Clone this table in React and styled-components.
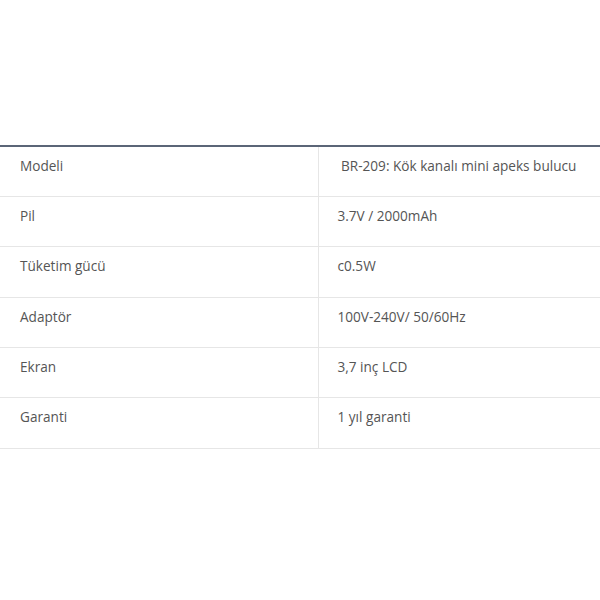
import React from 'react';
import styled, { createGlobalStyle } from 'styled-components';

const GlobalStyle = createGlobalStyle`
    body {
        margin: 0;
        background: #fff;
        font-family: "Open Sans", "Noto Sans", sans-serif;
    }
`

const Page = styled.div`
    width: 600px;
    height: 600px;
    padding-top: 145px;
    box-sizing: border-box;
`

const SpecTable = styled.table`
    width: 100%;
    border-collapse: collapse;
    border-top: 2px solid #5b6577;
`

const Row = styled.tr`
    height: 50.4px;
    border-bottom: 1px solid #e6e6e6;
`

const Cell = styled.td`
    vertical-align: top;
    padding: 9px 20px 0 ${p => p.$value ? '19px' : '20px'};
    font-size: 13.6px;
    line-height: 20px;
    color: #555;
    box-sizing: border-box;
    width: ${p => p.$value ? 'auto' : '318px'};
    border-right: ${p => p.$value ? 'none' : '1px solid #e6e6e6'};
`

const specs = [
    ['Modeli', '\u00a0BR-209: Kök kanalı mini apeks bulucu'],
    ['Pil', '3.7V / 2000mAh'],
    ['Tüketim gücü', 'c0.5W'],
    ['Adaptör', '100V-240V/ 50/60Hz'],
    ['Ekran', '3,7 inç LCD'],
    ['Garanti', '1 yıl garanti'],
];

export default function App() {
    return (
        <Page>
            <GlobalStyle />
            <SpecTable>
                <tbody>
                    {specs.map(([label, value]) => (
                        <Row key={label}>
                            <Cell>{label}</Cell>
                            <Cell $value>{value}</Cell>
                        </Row>
                    ))}
                </tbody>
            </SpecTable>
        </Page>
    );
}
